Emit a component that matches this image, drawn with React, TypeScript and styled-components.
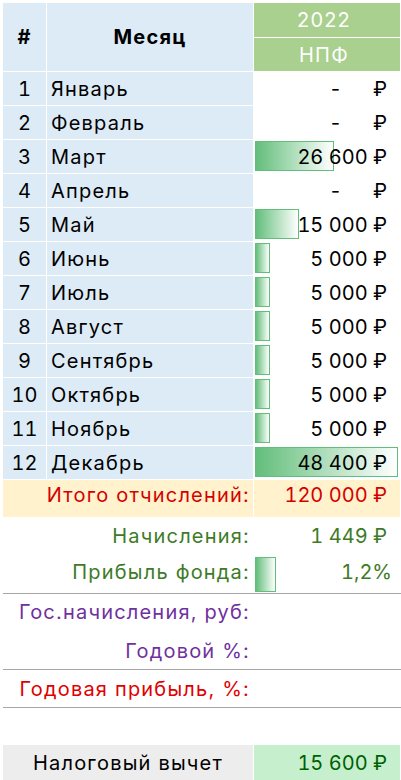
import React from "react";
import styled, { createGlobalStyle } from "styled-components";

const Global = createGlobalStyle`
  html, body { margin: 0; padding: 0; background: #ffffff; }
  #root { width: 401px; }
`;

const Page = styled.div`
  width: 401px;
  height: 780px;
  overflow: hidden;
  box-sizing: border-box;
  padding: 3px 0 0 3px;
  background: #ffffff;
  font-family: Inter, "Liberation Sans", sans-serif;
  font-size: 20px;
  color: #000000;
`;

const Table = styled.div`
  display: grid;
  grid-template-columns: 43px 206px 146px;
  grid-template-rows: 34px 33px repeat(12, 33px) 37px;
  gap: 1px;
`;

const HeadCell = styled.div`
  grid-row: span 2;
  background: #ddebf7;
  display: flex;
  align-items: center;
  justify-content: center;
  font-weight: 700;
  letter-spacing: 1.2px;
`;

const YearCell = styled.div`
  background: #a9d08e;
  color: #ffffff;
  display: flex;
  align-items: center;
  justify-content: center;
  padding-right: 6px;
  letter-spacing: 1.2px;
`;

const NumCell = styled.div`
  background: #ddebf7;
  display: flex;
  align-items: center;
  justify-content: center;
  font-variant-numeric: tabular-nums;
`;

const NameCell = styled.div`
  background: #ddebf7;
  display: flex;
  align-items: center;
  padding-left: 4px;
  letter-spacing: 1.2px;
`;

const ValueCell = styled.div<{ $bg?: string; $color?: string; $pr?: number; $lift?: number }>`
  position: relative;
  background: ${(p) => p.$bg || "transparent"};
  color: ${(p) => p.$color || "#000000"};
  display: flex;
  align-items: center;
  justify-content: flex-end;
  padding-right: ${(p) => p.$pr ?? 13}px;
  padding-bottom: ${(p) => p.$lift ?? 0}px;
  font-variant-numeric: tabular-nums;
`;

const ValueText = styled.span`
  position: relative;
  z-index: 1;
  white-space: nowrap;
`;

const Dash = styled.span`
  margin-right: 31px;
`;

const Bar = styled.div<{ $bottom?: number }>`
  position: absolute;
  left: 1px;
  top: 1px;
  bottom: ${(p) => p.$bottom ?? 2}px;
  box-sizing: border-box;
  border: 1px solid #63be7b;
  background: linear-gradient(90deg, #63be7b 0%, #ffffff 100%);
  z-index: 0;
`;

const LabelCell = styled.div<{ $bg?: string; $color: string; $lift?: number }>`
  grid-column: span 2;
  background: ${(p) => p.$bg || "transparent"};
  color: ${(p) => p.$color};
  display: flex;
  align-items: center;
  justify-content: flex-end;
  padding-right: 3px;
  padding-bottom: ${(p) => p.$lift ?? 0}px;
  letter-spacing: 1.2px;
`;

const SummaryRow = styled.div<{ $h: number; $line?: boolean }>`
  display: grid;
  grid-template-columns: 250px 146px;
  column-gap: 1px;
  height: ${(p) => p.$h}px;
  box-sizing: content-box;
  border-top: ${(p) => (p.$line ? "1px solid #a6a6a6" : "none")};
`;

const SumLabel = styled.div<{ $color: string; $lift?: number }>`
  color: ${(p) => p.$color};
  display: flex;
  align-items: center;
  justify-content: flex-end;
  padding-right: 3px;
  padding-bottom: ${(p) => p.$lift ?? 0}px;
  white-space: nowrap;
  letter-spacing: 1.2px;
`;

const TaxLabel = styled.div`
  background: #ededed;
  display: flex;
  align-items: center;
  justify-content: center;
  letter-spacing: 1.2px;
`;

type Month = { n: number; name: string; v: number };

const months: Month[] = [
  { n: 1, name: "Январь", v: 0 },
  { n: 2, name: "Февраль", v: 0 },
  { n: 3, name: "Март", v: 26600 },
  { n: 4, name: "Апрель", v: 0 },
  { n: 5, name: "Май", v: 15000 },
  { n: 6, name: "Июнь", v: 5000 },
  { n: 7, name: "Июль", v: 5000 },
  { n: 8, name: "Август", v: 5000 },
  { n: 9, name: "Сентябрь", v: 5000 },
  { n: 10, name: "Октябрь", v: 5000 },
  { n: 11, name: "Ноябрь", v: 5000 },
  { n: 12, name: "Декабрь", v: 48400 },
];

const MAX = Math.max(...months.map((m) => m.v));
const BAR_FULL = 143;

const fmt = (v: number) =>
  String(v).replace(/\B(?=(\d{3})+(?!\d))/g, "\u00A0") + "\u00A0₽";

export default function App() {
  const total = months.reduce((s, m) => s + m.v, 0);
  return (
    <Page>
      <Global />
      <Table>
        <HeadCell>#</HeadCell>
        <HeadCell>Месяц</HeadCell>
        <YearCell>2022</YearCell>
        <YearCell>НПФ</YearCell>
        {months.map((m) => (
          <React.Fragment key={m.n}>
            <NumCell>{m.n}</NumCell>
            <NameCell>{m.name}</NameCell>
            <ValueCell>
              {m.v > 0 && <Bar style={{ width: Math.round((m.v / MAX) * BAR_FULL) }} />}
              <ValueText>
                {m.v > 0 ? fmt(m.v) : (
                  <>
                    <Dash>-</Dash>₽
                  </>
                )}
              </ValueText>
            </ValueCell>
          </React.Fragment>
        ))}
        <LabelCell $bg="#fff2cc" $color="#d40000" $lift={7}>Итого отчислений:</LabelCell>
        <ValueCell $bg="#fff2cc" $color="#d40000" $lift={7}>
          <ValueText>{fmt(total)}</ValueText>
        </ValueCell>
      </Table>
      <SummaryRow $h={40}>
        <SumLabel $color="#3d7b27" $lift={2}>Начисления:</SumLabel>
        <ValueCell $color="#3d7b27" $lift={2}>
          <ValueText>{fmt(1449)}</ValueText>
        </ValueCell>
      </SummaryRow>
      <SummaryRow $h={36}>
        <SumLabel $color="#3d7b27" $lift={6}>Прибыль фонда:</SumLabel>
        <ValueCell $color="#3d7b27" $pr={8} $lift={6}>
          <Bar $bottom={1} style={{ width: 21, top: 0 }} />
          <ValueText>1,2%</ValueText>
        </ValueCell>
      </SummaryRow>
      <SummaryRow $h={38} $line>
        <SumLabel $color="#7030a0" $lift={2}>Гос.начисления, руб:</SumLabel>
        <div />
      </SummaryRow>
      <SummaryRow $h={37}>
        <SumLabel $color="#7030a0">Годовой %:</SumLabel>
        <div />
      </SummaryRow>
      <SummaryRow $h={37} $line>
        <SumLabel $color="#e00000">Годовая прибыль, %:</SumLabel>
        <div />
      </SummaryRow>
      <SummaryRow $h={37} $line>
        <div />
        <div />
      </SummaryRow>
      <SummaryRow $h={36}>
        <TaxLabel>Налоговый вычет</TaxLabel>
        <ValueCell $bg="#c6efce" $color="#006100">
          <ValueText>{fmt(15600)}</ValueText>
        </ValueCell>
      </SummaryRow>
    </Page>
  );
}
